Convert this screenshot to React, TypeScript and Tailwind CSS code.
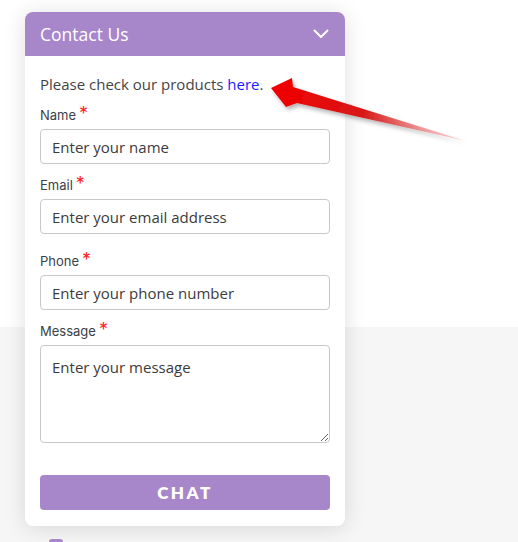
import React from "react";

const purple = "bg-[#a886ca]";

function Label({ text, className = "" }: { text: string; className?: string }) {
    return (
        <label className={`flex items-start h-[18px] text-[13px] leading-[18px] text-[#3a3f48] font-['Inter',sans-serif] ${className}`}>
            {text}
            <span className="ml-[3px] text-[18px] leading-[16px] text-[#ff2424]">*</span>
        </label>
    );
}

const inputCls =
    "block w-[290px] h-[35px] px-[11px] rounded-[4px] border border-[#c8c8c8] bg-white text-[15px] text-[#333] placeholder:text-[#3b3b3b] outline-none font-['Open_Sans',sans-serif]";

export default function App() {
    return (
        <div className="relative w-full h-[542px] overflow-hidden bg-[linear-gradient(to_bottom,#ffffff_327px,#f6f6f6_327px)]">
            <div className="pt-[12px] pl-[25px]">
                <div className="w-[320px] rounded-[8px] bg-white shadow-[0_2px_22px_rgba(0,0,0,0.13)] overflow-hidden">
                    <div className={`flex items-center justify-between h-[44px] pl-[15px] pr-[16px] ${purple}`}>
                        <span className="text-white text-[17.5px] font-['Open_Sans',sans-serif]">Contact Us</span>
                        <svg width="16" height="10" viewBox="0 0 16 10" fill="none">
                            <path d="M1.5 1.5 L8 8 L14.5 1.5" stroke="white" strokeWidth="2" strokeLinecap="round" strokeLinejoin="round" />
                        </svg>
                    </div>
                    <form className="px-[15px] pt-[18px] pb-[16px]" onSubmit={e => e.preventDefault()}>
                        <p className="h-[20px] leading-[20px] text-[15px] text-[#444] font-['Open_Sans',sans-serif] mb-[12px]">
                            Please check our products <a className="text-[#1a1aff]">here</a>.
                        </p>
                        <Label text="Name" />
                        <input className={`${inputCls} mt-[5px]`} placeholder="Enter your name" />
                        <Label text="Email" className="mt-[12px]" />
                        <input className={`${inputCls} mt-[5px]`} placeholder="Enter your email address" />
                        <Label text="Phone" className="mt-[18px]" />
                        <input className={`${inputCls} mt-[5px]`} placeholder="Enter your phone number" />
                        <Label text="Message" className="mt-[12px]" />
                        <textarea
                            className={`${inputCls} mt-[5px] h-[98px] pt-[10px] resize-y leading-[22px]`}
                            placeholder="Enter your message"
                        />
                        <button
                            type="submit"
                            className={`mt-[32px] w-[290px] h-[35px] rounded-[4px] ${purple} text-white text-[17px] font-extrabold tracking-[2.5px] font-['Lato',sans-serif]`}
                        >
                            CHAT
                        </button>
                    </form>
                </div>
                <div className={`mt-[13px] ml-[24px] w-[14px] h-[14px] rounded-[3px] ${purple}`} />
            </div>

            <svg
                className="absolute left-[260px] top-[70px] pointer-events-none"
                width="220"
                height="80"
                viewBox="260 70 220 80"
            >
                <defs>
                    <linearGradient id="arrowFill" x1="280" y1="92" x2="465" y2="142" gradientUnits="userSpaceOnUse">
                        <stop offset="0" stopColor="#f00000" />
                        <stop offset="0.45" stopColor="#d81818" />
                        <stop offset="1" stopColor="#f2a0a0" stopOpacity="0.4" />
                    </linearGradient>
                    <filter id="arrowShadow" x="-10%" y="-30%" width="120%" height="160%">
                        <feDropShadow dx="2" dy="3" stdDeviation="2" floodColor="#000" floodOpacity="0.3" />
                    </filter>
                </defs>
                <path
                    d="M271 88 L292 78 L293 87 L466 141 L297 103 L286 107 Z"
                    fill="url(#arrowFill)"
                    filter="url(#arrowShadow)"
                />
            </svg>
        </div>
    );
}
